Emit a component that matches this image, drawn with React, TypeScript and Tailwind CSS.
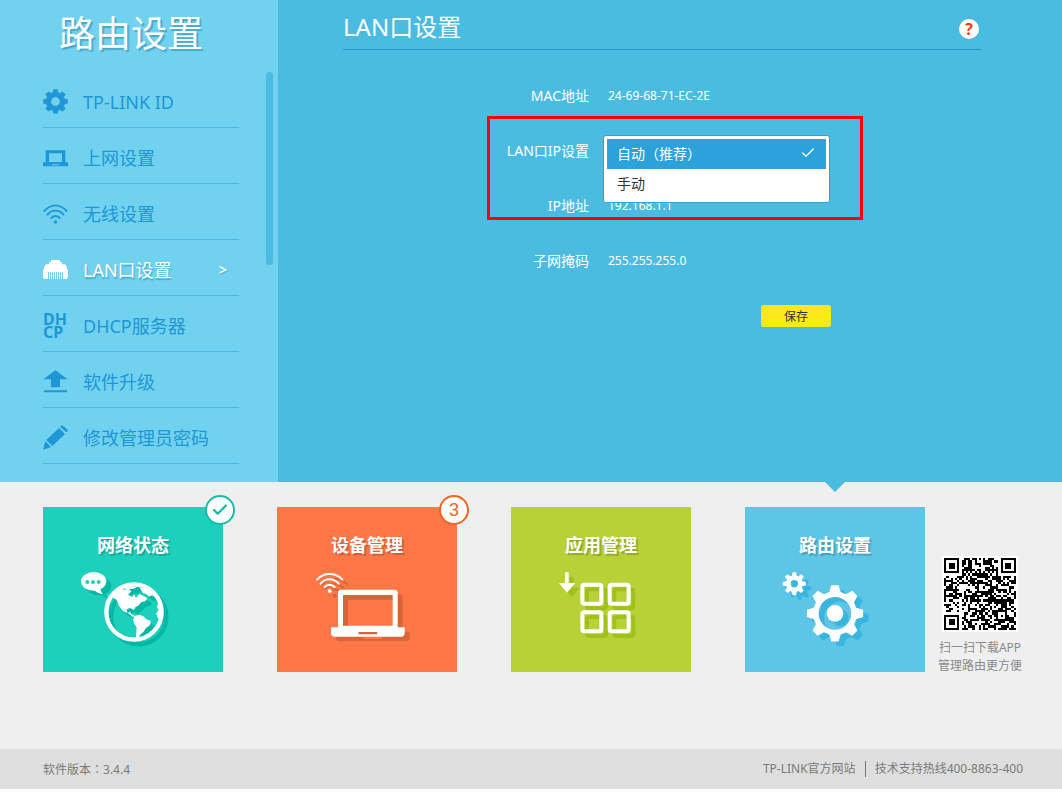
import * as React from 'react'
import { Check } from 'lucide-react'

// Closed outline of a cog with tapered teeth
function gearPath(cx: number, cy: number, outer: number, root: number, tip: number, base: number) {
  const points: string[] = []
  for (let i = 0; i < 8; i++) {
    const mid = (i * Math.PI) / 4
    const corners: [number, number][] = [
      [root, -base],
      [outer, -tip],
      [outer, tip],
      [root, base],
    ]
    for (const [r, offset] of corners) {
      const x = cx + r * Math.cos(mid + offset)
      const y = cy + r * Math.sin(mid + offset)
      points.push(`${x.toFixed(1)} ${y.toFixed(1)}`)
    }
  }
  return `M${points.join('L')}Z`
}

function circlePath(cx: number, cy: number, r: number) {
  return `M${cx - r} ${cy}a${r} ${r} 0 1 0 ${2 * r} 0a${r} ${r} 0 1 0 ${-2 * r} 0Z`
}

function GearIcon() {
  return (
    <svg viewBox="0 0 75 75" className="size-[25px]" aria-hidden="true">
      <path
        d={gearPath(37.5, 37.5, 36, 28, 0.16, 0.26) + circlePath(37.5, 37.5, 14)}
        fill="currentColor"
        fillRule="evenodd"
        stroke="currentColor"
        strokeWidth="2"
        strokeLinejoin="round"
      />
    </svg>
  )
}

function LaptopIcon() {
  return (
    <svg viewBox="0 -3 75 75" className="size-[25px]" aria-hidden="true">
      <path
        d="M8 13H67V49H75V61H0V49H8ZM18 22V48H57V22ZM27 55V58H48V55Z"
        fill="currentColor"
        fillRule="evenodd"
      />
    </svg>
  )
}

function WifiIcon() {
  return (
    <svg viewBox="0 -3 75 75" className="size-[25px]" fill="none" stroke="currentColor" strokeWidth="5.5" aria-hidden="true">
      <path d="M2 29Q18 10 37.500 10T73 29" />
      <path d="M12 40Q22 26 37.500 26T63 40" />
      <path d="M23 50Q29 42 37.500 42T52 50" />
      <circle cx="37.500" cy="60" r="5" fill="currentColor" stroke="none" />
    </svg>
  )
}

function PortIcon() {
  return (
    <svg viewBox="0 0 75 75" className="size-[25px]" aria-hidden="true">
      <path
        d="M18 15H24V9H51V15H57V22H65Q72 25 72 35Q75 37 75 42V54Q75 66 70 66H60V45H57V66H54V45H51V66H48V45H45V66H42V45H39V66H36V45H33V66H30V45H27V66H24V45H21V66H18V45H15V66H5Q0 66 0 54V42Q0 37 3 35Q3 25 10 22H18Z"
        fill="currentColor"
      />
    </svg>
  )
}

function DhcpIcon() {
  return (
    <span className="flex w-[25px] flex-col items-start text-base leading-[13px] font-bold" aria-hidden="true">
      <span>DH</span>
      <span>CP</span>
    </span>
  )
}

function UploadIcon() {
  return (
    <svg viewBox="0 0 75 75" className="size-[25px]" aria-hidden="true">
      <path d="M37.500 4L74 31H51V55H24V31H1ZM3 64H72V70H3Z" fill="currentColor" />
    </svg>
  )
}

function PencilIcon() {
  return (
    <svg viewBox="0 0 75 75" className="size-[25px]" fill="currentColor" aria-hidden="true">
      <path d="M53 3Q57 0 61 3L72 13Q76 17 72 21L70 22L51 5Z" />
      <path d="M48 9L66 27L28 63L10 45Z" />
      <path d="M7 49L24 66L0 74Z" />
    </svg>
  )
}

const MENU = [
  { label: 'TP-LINK ID', icon: <GearIcon /> },
  { label: '上网设置', icon: <LaptopIcon /> },
  { label: '无线设置', icon: <WifiIcon /> },
  { label: 'LAN口设置', icon: <PortIcon />, active: true },
  { label: 'DHCP服务器', icon: <DhcpIcon /> },
  { label: '软件升级', icon: <UploadIcon /> },
  { label: '修改管理员密码', icon: <PencilIcon /> },
]

function Sidebar() {
  return (
    <aside className="relative w-[278px] shrink-0 bg-[#70d2ef] pb-[18px]">
      <h1 className="flex h-[72px] items-start justify-center pt-2 pr-4 text-4xl leading-[52px] text-white [text-shadow:2px_2px_1px_#4aa9c9]">
        路由设置
      </h1>
      <nav className="mr-[39px] ml-[43px]">
        <ul>
          {MENU.map((item) => (
            <li key={item.label} className="border-b border-[#4bbce1]">
              <a
                href="#"
                className={
                  item.active
                    ? 'flex h-[55px] items-center gap-[15px] pt-1 text-lg text-white'
                    : 'flex h-[55px] items-center gap-[15px] pt-1 text-lg text-[#1f96d5]'
                }
              >
                {item.icon}
                <span className={item.active ? 'flex-1 [text-shadow:1px_2px_1px_#4aa9c9]' : 'flex-1'}>
                  {item.label}
                </span>
                {item.active && (
                  <span className="pr-3 text-sm font-bold [text-shadow:1px_1px_1px_#4aa9c9]">&gt;</span>
                )}
              </a>
            </li>
          ))}
        </ul>
      </nav>
      {/* Scroll thumb */}
      <div className="absolute top-[72px] right-[5px] h-[193px] w-[7px] rounded-full bg-[#4bbce1]" />
    </aside>
  )
}

function Field({ label, value }: { label: string; value: string }) {
  return (
    <div className="flex h-[55px] items-center gap-[19px]">
      <dt className="w-[246px] text-right text-sm">{label}</dt>
      <dd className="text-xs">{value}</dd>
    </div>
  )
}

function LanSettings() {
  return (
    <main className="flex-1 bg-[#4bbce1] pr-[81px] pl-[65px] text-white">
      <header className="flex h-[50px] items-center justify-between border-b border-[#1f96d5] pb-1">
        <h2 className="pt-2 text-2xl">LAN口设置</h2>
        <button
          type="button"
          aria-label="帮助"
          className="mt-3 mr-[2px] flex size-5 items-center justify-center rounded-full bg-white text-base leading-5 font-bold text-[#f63b0b]"
        >
          ?
        </button>
      </header>

      <form className="pt-[18px]">
        <dl>
          <Field label="MAC地址" value="24-69-68-71-EC-2E" />
        </dl>
        <div className="relative flex h-[55px] items-center gap-[14px]">
          <label htmlFor="lan-ip-mode" className="w-[246px] text-right text-sm">
            LAN口IP设置
          </label>
          <div className="relative z-10 h-8 w-[227px]">
            <select
              id="lan-ip-mode"
              size={2}
              defaultValue="auto"
              className="absolute top-0 left-0 h-[68px] w-full appearance-none overflow-hidden rounded-[3px] border border-[#2ba2d9] bg-white p-[3px] font-['Noto_Sans','Noto_Sans_CJK_TC',sans-serif] text-sm text-[#333] outline-none"
            >
              <option
                value="auto"
                className="h-[30px] px-[10px] pt-1 pb-0 checked:bg-linear-to-r checked:from-[#2ba2d9] checked:to-[#2ba2d9] checked:text-white"
              >
                自动（推荐）
              </option>
              <option value="manual" className="h-[30px] px-[10px] pt-1 pb-0">
                手动
              </option>
            </select>
            <Check className="pointer-events-none absolute top-[10px] right-[14px] size-4 text-white" strokeWidth={2} />
          </div>
          <div className="pointer-events-none absolute -top-[7px] left-[144px] z-20 h-[104px] w-[376px] border-[3px] border-[#fe0000]" />
        </div>
        <dl>
          <Field label="IP地址" value="192.168.1.1" />
          <Field label="子网掩码" value="255.255.255.0" />
        </dl>
        <div className="pt-[17px] pl-[418px]">
          <button
            type="button"
            className="block h-[22px] w-[70px] rounded-[3px] bg-[#fbe91a] pt-px text-xs text-[#333]"
          >
            保存
          </button>
        </div>
      </form>
    </main>
  )
}

function Land() {
  return (
    <>
      <path d="M248 322L262 302L276 294L282 300L296 296L304 304L294 314L306 320L312 312L318 324L328 312L340 318L352 324L346 334L334 336L326 346L316 352L312 360L300 354L290 358L292 368L302 366L304 372L314 378L308 380L294 370L278 362L266 346L260 330Z" />
      <path d="M276 292L300 288L322 290L312 296L288 298Z" />
      <path d="M328 292L350 296L366 308L376 322L366 316L356 320L348 312L338 308Z" />
      <path d="M312 378L330 374L342 380L348 388L362 392L360 406L348 414L340 426L330 434L324 446L318 440L320 412L312 400L310 388Z" />
      <path d="M396 340L386 342L380 350L386 360L378 370L384 384L394 388Z" />
    </>
  )
}

function GlobeArt() {
  return (
    <svg viewBox="129 234 360 240" className="h-20 w-[120px]" aria-hidden="true">
      <g transform="translate(14 14)" fill="#00b9a4">
        <circle cx="312" cy="366" r="83" fill="none" stroke="#00b9a4" strokeWidth="13" />
        <ellipse cx="192" cy="274" rx="38" ry="28" />
        <path d="M196 298L219 312L207 288Z" />
        <Land />
      </g>
      <g fill="#fff">
        <circle cx="312" cy="366" r="83" fill="none" stroke="#fff" strokeWidth="13" />
        <Land />
        <ellipse cx="191" cy="274" rx="38" ry="28" />
        <path d="M192 300Q204 312 219 312Q211 306 211 292Z" />
      </g>
      <g fill="#1dd0bc">
        <circle cx="172" cy="276" r="6" />
        <circle cx="189" cy="276" r="6" />
        <circle cx="206" cy="276" r="6" />
      </g>
    </svg>
  )
}

function WirelessLaptop({ slot }: { slot: string }) {
  return (
    <>
      <g fill="none" stroke="currentColor" strokeWidth="6" strokeLinecap="round">
        <path d="M171 269Q187 252 209 252T247 269" />
        <path d="M182 281Q193 268 209 268T236 281" />
        <path d="M194 291Q200 284 209 284T224 291" />
      </g>
      <circle cx="209" cy="303" r="6" fill="currentColor" />
      <path
        d="M234 412V308Q234 299 243 299H404Q413 299 413 308V412H434V429Q434 440 423 440H224Q213 440 213 429V412ZM249 315V407H398V315Z"
        fill="currentColor"
        fillRule="evenodd"
      />
      <rect x="295" y="426" width="57" height="7" rx="3" fill={slot} />
    </>
  )
}

function LaptopArt() {
  return (
    <svg viewBox="141 234 360 240" className="h-20 w-[120px]" aria-hidden="true">
      <g transform="translate(15 14)" className="text-[#d66539]">
        <WirelessLaptop slot="#ff7747" />
      </g>
      <g className="text-white">
        <WirelessLaptop slot="#d66539" />
      </g>
    </svg>
  )
}

function AppBoxes() {
  return (
    <>
      <path d="M195 250Q195 246 201 246Q206 246 206 250V279H226L201 308L177 279H195Z" fill="currentColor" />
      <g fill="none" stroke="currentColor" strokeWidth="12">
        <rect x="247" y="284" width="57" height="57" rx="6" />
        <rect x="329" y="284" width="57" height="57" rx="6" />
        <rect x="247" y="367" width="57" height="57" rx="6" />
        <rect x="329" y="367" width="57" height="57" rx="6" />
      </g>
    </>
  )
}

function AppsArt() {
  return (
    <svg viewBox="123 234 360 240" className="h-20 w-[120px]" aria-hidden="true">
      <g transform="translate(14 14)" className="text-[#a0c01e]">
        <AppBoxes />
      </g>
      <g className="text-white">
        <AppBoxes />
      </g>
    </svg>
  )
}

function Gears() {
  return (
    <g fill="currentColor" fillRule="evenodd">
      <path d={gearPath(178, 341, 35, 25, 0.15, 0.28) + circlePath(178, 341, 11)} />
      <path d={gearPath(300, 430, 85, 66, 0.13, 0.26) + circlePath(300, 430, 49)} />
      <circle cx="300" cy="430" r="25" />
    </g>
  )
}

function GearsArt() {
  return (
    <svg viewBox="120 294 360 240" className="h-20 w-[120px]" aria-hidden="true">
      <g transform="translate(16 14)" className="text-[#3ab5de]">
        <Gears />
      </g>
      <g className="text-white">
        <Gears />
      </g>
    </svg>
  )
}

function Tile({
  title,
  color,
  badge,
  current,
  children,
}: {
  title: string
  color: string
  badge?: React.ReactNode
  current?: boolean
  children: React.ReactNode
}) {
  return (
    <a href="#" className={`relative flex flex-1 flex-col items-center pt-[26px] pb-6 ${color}`}>
      <span className="text-lg leading-6 font-bold text-white [text-shadow:2px_2px_1px_rgba(0,0,0,0.2)]">{title}</span>
      <span className="mt-[11px] flex">{children}</span>
      {badge}
      {current && (
        <svg viewBox="0 0 20 10" className="absolute -top-[25px] left-1/2 h-[10px] w-5 -translate-x-1/2" aria-hidden="true">
          <path d="M0 0H20L10 10Z" fill="#4bbce1" />
        </svg>
      )}
    </a>
  )
}

const QR_SIZE = 33

function finder(x: number, y: number) {
  const ring = Math.max(Math.abs(x - 3), Math.abs(y - 3))
  return ring === 3 || ring <= 1
}

function isDark(x: number, y: number) {
  const far = QR_SIZE - 8
  if (x < 8 && y < 8) return x < 7 && y < 7 && finder(x, y)
  if (x >= far && y < 8) return x > far && y < 7 && finder(x - far - 1, y)
  if (x < 8 && y >= far) return x < 7 && y > far && finder(x, y - far - 1)
  const align = Math.max(Math.abs(x - 26), Math.abs(y - 26))
  if (align <= 2) return align !== 1
  if (x === 6 || y === 6) return (x + y) % 2 === 0
  const n = Math.sin(x * 12.9898 + y * 78.233) * 43758.5453
  return n - Math.floor(n) > 0.47
}

function QrCode() {
  let d = ''
  for (let y = 0; y < QR_SIZE; y++) {
    for (let x = 0; x < QR_SIZE; x++) {
      if (isDark(x, y)) d += `M${x} ${y}h1v1h-1z`
    }
  }
  return (
    <svg viewBox="-1 -1 35 35" className="size-[76px] bg-white" shapeRendering="crispEdges" role="img" aria-label="APP">
      <path d={d} fill="#000" />
    </svg>
  )
}

export default function App() {
  return (
    <div className="bg-[#efefef] font-['Noto_Sans','Noto_Sans_CJK_SC',sans-serif]">
      <div className="flex">
        <Sidebar />
        <LanSettings />
      </div>

      <section className="flex items-start gap-[13px] pt-[25px] pr-10 pb-[74px] pl-[43px]">
        <div className="flex flex-1 gap-[54px]">
          <Tile
            title="网络状态"
            color="bg-[#1dd0bc]"
            badge={
              <span className="absolute -top-3 -right-3 flex size-[30px] items-center justify-center rounded-full border-2 border-[#14bda8] bg-white text-[#14bda8]">
                <Check className="size-[18px]" strokeWidth={3} />
              </span>
            }
          >
            <GlobeArt />
          </Tile>
          <Tile
            title="设备管理"
            color="bg-[#ff7747]"
            badge={
              <span className="absolute -top-3 -right-3 flex size-[30px] items-center justify-center rounded-full border-2 border-[#f26522] bg-white font-['Liberation_Sans',sans-serif] text-lg text-[#f26522]">
                3
              </span>
            }
          >
            <LaptopArt />
          </Tile>
          <Tile title="应用管理" color="bg-[#b8d137]">
            <AppsArt />
          </Tile>
          <Tile title="路由设置" color="bg-[#5dc5e5]" current>
            <GearsArt />
          </Tile>
        </div>
        <div className="flex w-[84px] flex-col items-center pt-[49px] text-xs leading-[18px] whitespace-nowrap text-[#8a8a8a]">
          <QrCode />
          <p className="pt-[7px] text-center">
            扫一扫下载APP
            <br />
            管理路由更方便
          </p>
        </div>
      </section>

      <footer className="flex h-10 items-center justify-between bg-[#dedede] pr-[39px] pl-[43px] font-['Noto_Sans','Noto_Sans_CJK_SC',sans-serif] text-xs text-[#7a7a7a]">
        <span>
          软件版本<span className="font-['Noto_Sans_CJK_TC',sans-serif]">：</span>3.4.4
        </span>
        <div className="flex items-center">
          <a href="#" className="border-r border-[#7a7a7a] pr-[9px]">
            TP-LINK官方网站
          </a>
          <span className="pl-[9px]">技术支持热线400-8863-400</span>
        </div>
      </footer>
    </div>
  )
}
